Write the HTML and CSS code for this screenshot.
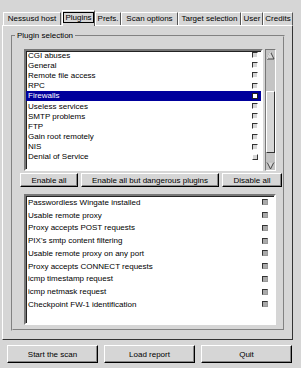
FILE: index.html
```html
<!DOCTYPE html>
<html lang="en">
<head>
  <meta charset="UTF-8">
  <title>Nessus Setup - Plugins</title>
  <link rel="stylesheet" href="styles.css">
</head>
<body>
  <div class="window">
    <div class="notebook">
      <div class="tabs">
        <div class="tab t-host">Nessusd host</div>
        <div class="tab active"><span class="focus">Plugins</span></div>
        <div class="tab t-prefs">Prefs.</div>
        <div class="tab t-scan">Scan options</div>
        <div class="tab t-target">Target selection</div>
        <div class="tab t-user">User</div>
        <div class="tab t-credits">Credits</div>
      </div>
      <div class="page">
        <fieldset class="frame">
          <legend>Plugin selection</legend>

          <div class="families">
            <div class="list upper-list">
              <ul class="rows">
                <li class="first"><span>CGI abuses</span><i class="check"></i></li>
                <li><span>General</span><i class="check"></i></li>
                <li><span>Remote file access</span><i class="check"></i></li>
                <li><span>RPC</span><i class="check"></i></li>
                <li class="selected"><span>Firewalls</span><i class="check on"></i></li>
                <li><span>Useless services</span><i class="check"></i></li>
                <li><span>SMTP problems</span><i class="check"></i></li>
                <li><span>FTP</span><i class="check"></i></li>
                <li><span>Gain root remotely</span><i class="check"></i></li>
                <li><span>NIS</span><i class="check"></i></li>
                <li><span>Denial of Service</span><i class="check raised"></i></li>
              </ul>
            </div>
            <div class="scrollbar">
              <div class="arrow">
                <svg width="9" height="9" viewBox="0 0 9 9"><path d="M4.5 1 L8 8 L1 8 Z" fill="#d6d6d6" stroke="#444" stroke-width="1"/><path d="M4.5 1 L1 8" stroke="#fff" stroke-width="1"/></svg>
              </div>
              <div class="trough">
                <div class="thumb"></div>
              </div>
              <div class="arrow">
                <svg width="9" height="9" viewBox="0 0 9 9"><path d="M1 1 L8 1 L4.5 8 Z" fill="#d6d6d6" stroke="#444" stroke-width="1"/><path d="M1 1 L8 1" stroke="#fff" stroke-width="1"/></svg>
              </div>
            </div>
          </div>

          <div class="button-row">
            <button class="btn b-enable">Enable all</button>
            <button class="btn b-safe">Enable all but dangerous plugins</button>
            <button class="btn b-disable">Disable all</button>
          </div>

          <div class="list lower-list">
            <ul class="rows">
              <li><span>Passwordless Wingate installed</span><i class="check dark"></i></li>
              <li><span>Usable remote proxy</span><i class="check dark"></i></li>
              <li><span>Proxy accepts POST requests</span><i class="check dark"></i></li>
              <li><span>PIX's smtp content filtering</span><i class="check dark"></i></li>
              <li><span>Usable remote proxy on any port</span><i class="check dark"></i></li>
              <li><span>Proxy accepts CONNECT requests</span><i class="check dark"></i></li>
              <li><span>icmp timestamp request</span><i class="check dark"></i></li>
              <li><span>icmp netmask request</span><i class="check dark"></i></li>
              <li><span>Checkpoint FW-1 identification</span><i class="check dark"></i></li>
            </ul>
          </div>
        </fieldset>
      </div>
    </div>

    <div class="actions">
      <button class="btn big">Start the scan</button>
      <button class="btn big">Load report</button>
      <button class="btn big">Quit</button>
    </div>
  </div>
</body>
</html>
```

FILE: styles.css
```css
body {
  margin: 0;
  background-color: #d6d6d6;
  font-family: "Liberation Sans", Arial, sans-serif;
  font-size: 8px;
  color: #000;
}
.window {
  width: 301px;
  height: 368px;
  padding-top: 10px;
  box-sizing: border-box;
}
.notebook {
  margin-left: 2px;
  width: 291px;
}

/* tabs */
.tabs {
  display: flex;
  align-items: flex-end;
  height: 15px;
  padding-left: 1px;
}
.tab {
  height: 13px;
  line-height: 12px;
  border: 1px solid;
  border-bottom: none;
  border-color: #fff #555 transparent #fff;
  white-space: nowrap;
  text-align: center;
  box-sizing: border-box;
  overflow: hidden;
}
.t-host { width: 58px; margin-right: 1px; }
.t-prefs { width: 26px; }
.t-scan { width: 57px; }
.t-target { width: 63px; }
.t-user { width: 22px; }
.t-credits { width: 30px; }
.tab.active {
  height: 16px;
  line-height: 14px;
  width: 33px;
  margin-bottom: -1px;
  background-color: #d6d6d6;
  position: relative;
}
.tab .focus {
  border: 1px solid #000;
  padding: 0 1px;
}
.page {
  height: 315px;
  border: 1px solid;
  border-color: #fff #333 #333 #fff;
  padding-top: 5px;
  box-sizing: border-box;
}

/* frame */
.frame {
  min-width: 0;
  margin: 0 7px 0 8px;
  padding: 8px 1px 4px 7px;
  border: 2px groove #d6d6d6;
}
.frame legend {
  padding: 0 2px;
  margin-left: -5px;
  line-height: 10px;
}

/* lists */
.list {
  background-color: #fff;
  border: 2px solid;
  border-color: #777 #fff #fff #777;
  box-shadow: inset 1px 1px #222;
  overflow: hidden;
}
.rows {
  list-style-type: none;
  margin: 0;
  padding: 0;
}
.rows li {
  display: flex;
  justify-content: space-between;
  align-items: center;
  white-space: nowrap;
}
.rows li span {
  padding-left: 2px;
}
.families {
  display: flex;
  height: 122px;
  margin: 0 6px 0 4px;
}
.upper-list {
  flex-grow: 1;
  margin-right: 2px;
}
.upper-list .rows li {
  height: 10.2px;
  padding-right: 3px;
}
.upper-list .rows li.first {
  margin-top: -1px;
}
.upper-list li.selected {
  background-color: #00009c;
  color: #fff;
}
.lower-list {
  margin: 7px 6px 0 4px;
  height: 127px;
}
.lower-list .rows li {
  height: 12.75px;
  padding-right: 6px;
}

/* check marks */
.check {
  display: block;
  width: 4px;
  height: 4px;
  border: 1px solid;
  border-color: #333 #fff #fff #333;
  background-color: #d6d6d6;
}
.check.on {
  background-color: #fff;
  border-color: #222;
}
.check.raised {
  border-color: #fff #333 #333 #fff;
}
.check.dark {
  border-color: #333 #999 #999 #333;
  background-color: #aaa;
}

/* scrollbar */
.scrollbar {
  width: 9px;
  display: flex;
  flex-direction: column;
  border: 1px solid;
  border-color: #777 #fff #fff #777;
  background-color: #c4c4c4;
}
.scrollbar .arrow {
  height: 10px;
  display: flex;
  align-items: center;
  justify-content: center;
}
.trough {
  flex-grow: 1;
  padding-top: 31px;
  padding-bottom: 4px;
}
.thumb {
  height: 62px;
  background-color: #d6d6d6;
  border: 1px solid;
  border-color: #fff #333 #333 #fff;
  box-sizing: border-box;
}

/* buttons */
.btn {
  font-family: "Liberation Sans", Arial, sans-serif;
  font-size: 8px;
  color: #000;
  background-color: #d6d6d6;
  border: 1px solid;
  border-color: #fff #000 #000 #fff;
  box-shadow: inset -1px -1px #888;
  padding: 0;
  margin: 0;
  cursor: pointer;
}
.button-row {
  display: flex;
  justify-content: space-between;
  margin-top: 2px;
}
.button-row .btn {
  height: 14px;
}
.b-enable { width: 58px; }
.b-safe { width: 138px; }
.b-disable { width: 60px; }
.actions {
  display: flex;
  gap: 6px;
  padding-left: 7px;
  margin-top: 5px;
}
.btn.big {
  width: 91px;
  height: 18px;
}
```
